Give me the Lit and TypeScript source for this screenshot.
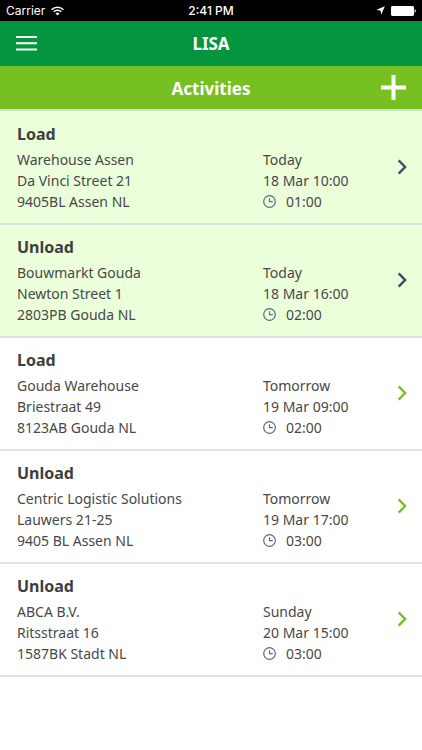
import { LitElement, css, html, svg } from "lit";
import { customElement, property } from "lit/decorators.js";
import { classMap } from "lit/directives/class-map.js";

interface Activity {
  kind: string;
  address: string[];
  day: string;
  time: string;
  duration: string;
  today?: boolean;
}

const activities: Activity[] = [
  { kind: "Load", address: ["Warehouse Assen", "Da Vinci Street 21", "9405BL Assen NL"], day: "Today", time: "18 Mar 10:00", duration: "01:00", today: true },
  { kind: "Unload", address: ["Bouwmarkt Gouda", "Newton Street 1", "2803PB Gouda NL"], day: "Today", time: "18 Mar 16:00", duration: "02:00", today: true },
  { kind: "Load", address: ["Gouda Warehouse", "Briestraat 49", "8123AB Gouda NL"], day: "Tomorrow", time: "19 Mar 09:00", duration: "02:00" },
  { kind: "Unload", address: ["Centric Logistic Solutions", "Lauwers 21-25", "9405 BL Assen NL"], day: "Tomorrow", time: "19 Mar 17:00", duration: "03:00" },
  { kind: "Unload", address: ["ABCA B.V.", "Ritsstraat 16", "1587BK Stadt NL"], day: "Sunday", time: "20 Mar 15:00", duration: "03:00" },
];

@customElement("status-bar")
class StatusBar extends LitElement {
  static styles = css`
    :host {
      display: grid;
      grid-template-columns: 1fr auto 1fr;
      align-items: center;
      height: 21px;
      padding: 0 6px;
      background: #000;
      color: #fff;
      font: 12px/20px Inter, "Liberation Sans", sans-serif;
    }
    .side { display: flex; align-items: center; gap: 6px; }
    .clock { font-weight: 500; }
    .end { justify-content: flex-end; }
    svg { display: block; }
  `;

  render() {
    return html`
      <div class="side">
        <span>Carrier</span>
        <svg width="13" height="10" viewBox="0 0 13 10" fill="none" stroke="#fff" stroke-width="1.6" aria-hidden="true">
          <path d="M.6 3.7a8.4 8.4 0 0 1 11.8 0M2.7 5.8a5.4 5.4 0 0 1 7.6 0" />
          <path d="M6.5 9.6 4.5 7.5a2.9 2.9 0 0 1 4 0z" fill="#fff" stroke="none" />
        </svg>
      </div>
      <span class="clock">2:41 PM</span>
      <div class="side end">
        <svg width="9" height="9" viewBox="0 0 9 9" fill="#fff" aria-hidden="true"><path d="M8.8.2 5.2 8.8 4.5 4.5.2 3.9z" /></svg>
        <svg width="25" height="10" viewBox="0 0 25 10" fill="#fff" aria-hidden="true">
          <rect width="23" height="10" rx="1.4" /><path d="M23.6 3.3c1.6.3 1.6 3.1 0 3.4z" />
        </svg>
      </div>
    `;
  }
}

@customElement("activity-row")
class ActivityRow extends LitElement {
  @property({ attribute: false }) activity!: Activity;

  static styles = css`
    :host { display: block; }
    .row {
      display: grid;
      grid-template-columns: 246fr 159fr;
      padding: 11px 0 11px 17px;
      border-bottom: 2px solid #dfe4e9;
      background: #fff;
      color: #484848;
      font: 14px/21px "Noto Sans", sans-serif;
      text-decoration: none;
    }
    .today { border-bottom-color: #d7e5e2; background: #eaffda; }
    h2 { grid-column: 1 / -1; margin: 0 0 4px; color: #3e3e3e; font-size: 16px; line-height: 22px; }
    p { margin: 0; }
    .when { display: flex; align-items: flex-start; justify-content: space-between; }
    .duration { display: flex; align-items: center; gap: 10px; }
    .chevron { margin: 10px 15px 0 0; color: #77c021; }
    .today .chevron { color: #3d4b63; }
    svg { display: block; fill: none; stroke: currentColor; }
    .dial { color: #596b7d; }
  `;

  render() {
    const a = this.activity;
    const clock = svg`<circle cx="6.5" cy="6.5" r="5.8" /><path d="M6.5 3.2v3.5h3.3" />`;
    return html`
      <a href="#" class=${classMap({ row: true, today: !!a.today })}>
        <h2>${a.kind}</h2>
        <div>${a.address.map((line) => html`<p>${line}</p>`)}</div>
        <div class="when">
          <div>
            <p>${a.day}</p>
            <p>${a.time}</p>
            <p class="duration">
              <svg class="dial" width="13" height="13" viewBox="0 0 13 13" stroke-width="1.2" aria-hidden="true">${clock}</svg>
              <span>${a.duration}</span>
            </p>
          </div>
          <svg class="chevron" width="10" height="16" viewBox="0 0 10 16" stroke-width="2.4" aria-hidden="true">
            <path d="M1.7 1.4 8.1 8l-6.4 6.6" />
          </svg>
        </div>
      </a>
    `;
  }
}

@customElement("app-root")
class AppRoot extends LitElement {
  static styles = css`
    :host {
      display: block;
      min-height: 100vh;
      background: #fff;
      font-family: "Noto Sans", sans-serif;
    }
    .bar {
      display: grid;
      grid-template-columns: 60px 1fr 60px;
      align-items: center;
      box-sizing: border-box;
      height: 45px;
      color: #fff;
      text-align: center;
    }
    .app { background: #03963f; }
    .section { border-bottom: 2px solid #d0dfce; background: #77c021; }
    h1 { grid-column: 2; margin: 0; font-size: 17px; line-height: 24px; font-weight: 700; }
    .section h1 { padding-top: 2px; }
    button {
      display: flex;
      align-items: center;
      height: 40px;
      padding: 0 16px;
      border: 0;
      background: none;
      color: inherit;
    }
    .add { justify-content: flex-end; }
    svg { display: block; flex: none; fill: currentColor; }
    ul { margin: 0; padding: 1px 0 0; background: #eaffda; list-style: none; }
  `;

  render() {
    return html`
      <status-bar></status-bar>
      <header class="bar app">
        <button aria-label="Menu">
          <svg width="21" height="15" viewBox="0 0 21 15"><path d="M0 0h21v2H0zM0 6.3h21v2H0zM0 12.6h21v2H0z" /></svg>
        </button>
        <h1>LISA</h1>
      </header>
      <div class="bar section">
        <h1>Activities</h1>
        <button class="add" aria-label="Add activity">
          <svg width="25" height="25" viewBox="0 0 25 25"><path d="M10.5 0h4v10.5H25v4H14.5V25h-4V14.5H0v-4h10.5z" /></svg>
        </button>
      </div>
      <ul>
        ${activities.map((a) => html`<li><activity-row .activity=${a}></activity-row></li>`)}
      </ul>
    `;
  }
}
